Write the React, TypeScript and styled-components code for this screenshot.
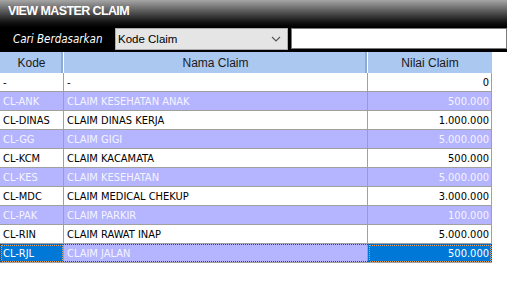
import React from "react";
import styled, { createGlobalStyle } from "styled-components";

const Global = createGlobalStyle`
  html, body { margin: 0; padding: 0; background: #ffffff; }
  #root { width: 507px; height: 285px; overflow: hidden; }
`;

const Page = styled.div`
  width: 507px;
  height: 285px;
  background: #ffffff;
  display: flex;
  flex-direction: column;
`;

const TopPanel = styled.div`
  height: 52px;
  background: linear-gradient(to bottom, #a6a6a6 0px, #626262 10px, #141414 22px, #000000 27px, #000000 100%);
  display: flex;
  flex-direction: column;
`;

const Title = styled.div`
  height: 28px;
  padding: 4px 0 0 8px;
  box-sizing: border-box;
  color: #ffffff;
  font-family: "Liberation Sans", Arial, sans-serif;
  font-weight: bold;
  font-size: 12.5px;
  letter-spacing: -0.6px;
  line-height: 14px;
`;

const SearchRow = styled.div`
  display: flex;
  align-items: flex-start;
  height: 22px;
`;

const SearchLabel = styled.div`
  width: 115px;
  padding-left: 13px;
  box-sizing: border-box;
  color: #ffffff;
  font-family: "DejaVu Sans Condensed", "DejaVu Sans", sans-serif;
  font-style: italic;
  font-size: 11.5px;
  line-height: 22px;
  white-space: nowrap;
`;

const Combo = styled.div`
  width: 173px;
  height: 22px;
  box-sizing: border-box;
  background: #e5e5e5;
  border: 1px solid #adadad;
  display: flex;
  align-items: center;
  justify-content: space-between;
  padding: 0 6px 0 2px;
  font-family: "Liberation Sans", Arial, sans-serif;
  font-size: 11.5px;
  color: #000;
`;

const TextInput = styled.div`
  margin-left: 3px;
  flex: 1;
  height: 21px;
  box-sizing: border-box;
  background: #ffffff;
  border: 1px solid #7a7a7a;
`;

const Grid = styled.div`
  width: 492px;
  display: flex;
  flex-direction: column;
`;

const HeaderRow = styled.div`
  display: grid;
  grid-template-columns: 64px 304px 124px;
  height: 21px;
  background: #abc8f0;
`;

const HeaderCell = styled.div`
  border-right: 1px solid #ffffff;
  box-shadow: inset -2px 0 0 #8fa9cf;
  display: flex;
  align-items: center;
  justify-content: center;
  font-family: "Liberation Sans", Arial, sans-serif;
  font-size: 12px;
  color: #1a1a1a;
  &:last-child { border-right: none; box-shadow: none; }
`;

const Row = styled.div<{ $alt: boolean; $focus?: boolean }>`
  display: grid;
  grid-template-columns: 64px 304px 124px;
  height: 19px;
  background: ${(p) => (p.$alt ? "#b4b4ff" : "#ffffff")};
  color: ${(p) => (p.$alt ? "#f4f4ff" : "#000000")};
  position: relative;
  ${(p) =>
    p.$focus
      ? `&::after { content: ""; position: absolute; inset: 0 0 1px 0; border: 1px dotted #444; pointer-events: none; }`
      : ""}
`;

const Cell = styled.div<{ $right?: boolean; $sel?: boolean }>`
  border-right: 1px solid #a0a0a0;
  border-bottom: 1px solid #a0a0a0;
  box-sizing: border-box;
  height: 19px;
  display: flex;
  align-items: center;
  justify-content: ${(p) => (p.$right ? "flex-end" : "flex-start")};
  padding: ${(p) => (p.$right ? "0 2px 0 0" : "0 0 0 3px")};
  font-family: "DejaVu Sans Condensed", "DejaVu Sans", sans-serif;
  font-size: 11px;
  white-space: nowrap;
  overflow: hidden;
  ${(p) =>
    p.$sel
      ? `background: #0078d7; color: #ffffff; outline: 1px dotted #e0a060; outline-offset: -2px;`
      : ""}
`;

const Chevron = () => (
  <svg width="10" height="6" viewBox="0 0 10 6">
    <path d="M1 1 L5 5 L9 1" fill="none" stroke="#555" strokeWidth="1.1" />
  </svg>
);

const rows: [string, string, string][] = [
  ["-", "-", "0"],
  ["CL-ANK", "CLAIM KESEHATAN ANAK", "500.000"],
  ["CL-DINAS", "CLAIM DINAS KERJA", "1.000.000"],
  ["CL-GG", "CLAIM GIGI", "5.000.000"],
  ["CL-KCM", "CLAIM KACAMATA", "500.000"],
  ["CL-KES", "CLAIM KESEHATAN", "5.000.000"],
  ["CL-MDC", "CLAIM MEDICAL CHEKUP", "3.000.000"],
  ["CL-PAK", "CLAIM PARKIR", "100.000"],
  ["CL-RIN", "CLAIM RAWAT INAP", "5.000.000"],
  ["CL-RJL", "CLAIM JALAN", "500.000"],
];

export default function App() {
  return (
    <>
      <Global />
      <Page>
        <TopPanel>
          <Title>VIEW MASTER CLAIM</Title>
          <SearchRow>
            <SearchLabel>Cari Berdasarkan</SearchLabel>
            <Combo>
              <span>Kode Claim</span>
              <Chevron />
            </Combo>
            <TextInput />
          </SearchRow>
        </TopPanel>
        <Grid>
          <HeaderRow>
            <HeaderCell>Kode</HeaderCell>
            <HeaderCell>Nama Claim</HeaderCell>
            <HeaderCell>Nilai Claim</HeaderCell>
          </HeaderRow>
          {rows.map((r, i) => {
            const last = i === rows.length - 1;
            return (
              <Row key={r[0]} $alt={i % 2 === 1} $focus={last}>
                <Cell $sel={last}>{r[0]}</Cell>
                <Cell>{r[1]}</Cell>
                <Cell $right $sel={last}>{r[2]}</Cell>
              </Row>
            );
          })}
        </Grid>
      </Page>
    </>
  );
}
